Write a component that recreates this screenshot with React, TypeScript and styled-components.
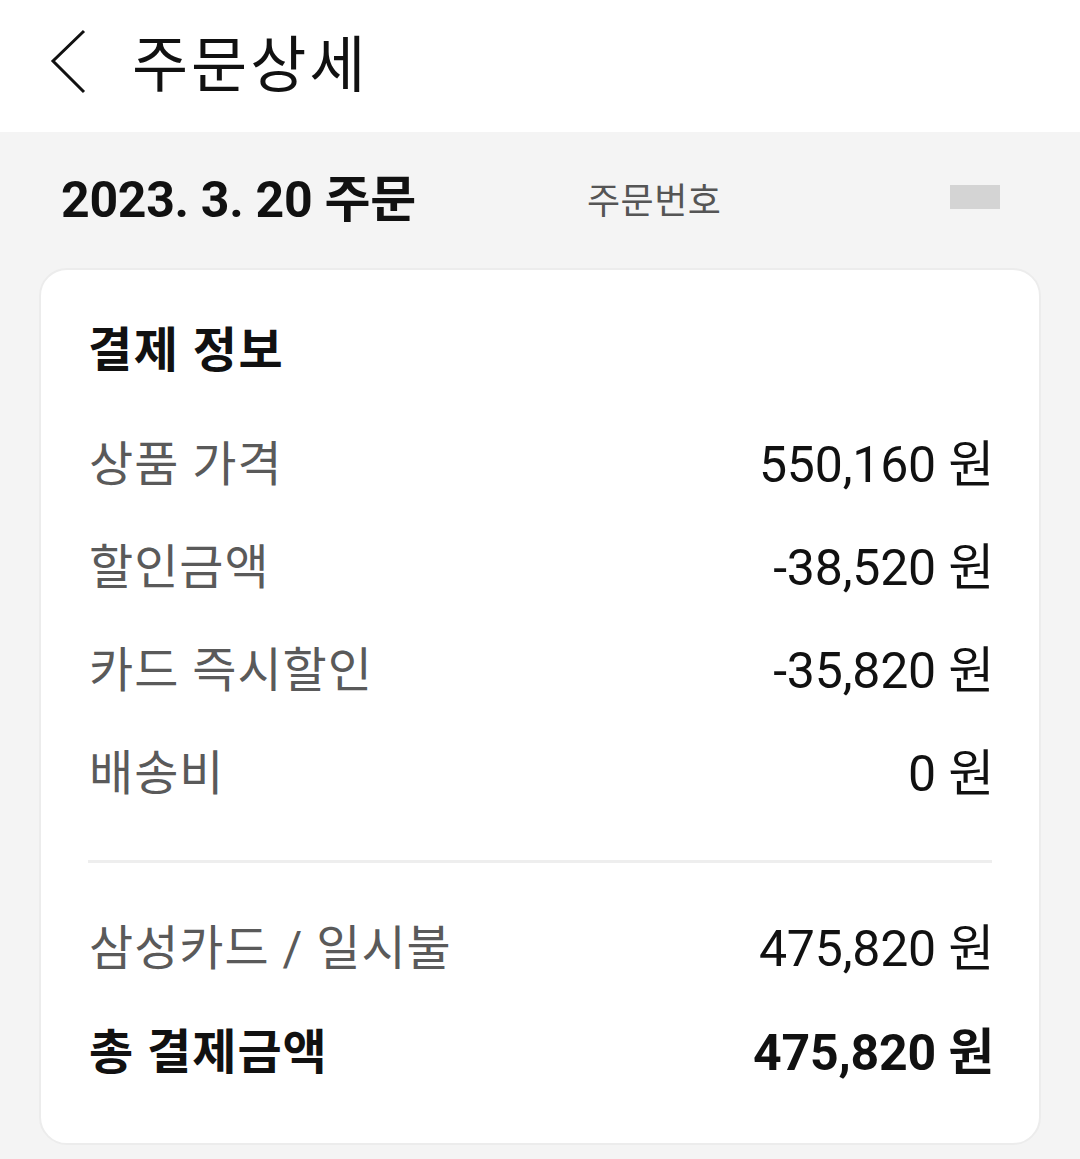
import React from "react";
import styled, { createGlobalStyle } from "styled-components";

const GlobalStyle = createGlobalStyle`
  html, body {
    margin: 0;
    padding: 0;
    background: #f4f4f4;
  }
  body {
    font-family: Roboto, "Noto Sans CJK KR", "Noto Sans", sans-serif;
    color: #111;
    -webkit-font-smoothing: antialiased;
  }
  * { box-sizing: border-box; }
`;

const Page = styled.div`
  width: 1080px;
  min-height: 1159px;
  background: #f4f4f4;
  display: flex;
  flex-direction: column;
`;

const Header = styled.header`
  height: 132px;
  background: #ffffff;
  display: flex;
  align-items: center;
  padding-left: 50px;
`;

const BackButton = styled.button`
  border: 0;
  background: transparent;
  padding: 0;
  margin: 0 0 10px 0;
  width: 40px;
  height: 66px;
  display: flex;
  align-items: center;
  justify-content: flex-start;
  cursor: pointer;
`;

const Title = styled.h1`
  margin: 0 0 0 42px;
  font-size: 61px;
  font-weight: 400;
  line-height: 1;
  color: #111;
  letter-spacing: 3px;
`;

const DateRow = styled.div`
  height: 136px;
  display: grid;
  grid-template-columns: 526px 1fr 50px;
  align-items: center;
  padding: 0 80px 0 61px;
`;

const OrderDate = styled.div`
  font-size: 50px;
  font-weight: 700;
  line-height: 1;
  color: #111;
  letter-spacing: -0.3px;
`;

const OrderNoLabel = styled.div`
  font-size: 36px;
  font-weight: 400;
  line-height: 1;
  color: #555;
  letter-spacing: 0.5px;
  transform: translateY(2px);
`;

const OrderNoMask = styled.div`
  width: 50px;
  height: 24px;
  background: #d4d4d4;
  transform: translateY(-3px);
`;

const Card = styled.section`
  margin: 0 39px;
  background: #ffffff;
  border: 2px solid #ececec;
  border-radius: 28px;
  padding: 46px 47px 38px 47px;
`;

const CardTitle = styled.h2`
  margin: 0;
  height: 60px;
  display: flex;
  align-items: center;
  font-size: 48px;
  font-weight: 700;
  color: #111;
  letter-spacing: 1.5px;
  margin-bottom: 37px;
`;

const Row = styled.div<{ $height?: number }>`
  height: ${(p) => p.$height ?? 103}px;
  display: flex;
  align-items: center;
  justify-content: space-between;
`;

const Label = styled.span<{ $strong?: boolean }>`
  font-size: 48px;
  line-height: 1;
  font-weight: ${(p) => (p.$strong ? 700 : 400)};
  color: ${(p) => (p.$strong ? "#111" : "#5a5a5a")};
  letter-spacing: 1px;
  padding-left: 1px;
`;

const Value = styled.span<{ $strong?: boolean }>`
  font-size: 50px;
  line-height: 1;
  font-weight: ${(p) => (p.$strong ? 700 : 400)};
  color: #111;
  letter-spacing: -0.2px;
  margin-right: -2px;
`;

const Divider = styled.hr`
  border: 0;
  height: 3px;
  background: #eeeeee;
  margin: 35px 0 34px 0;
`;

const ChevronLeft = () => (
  <svg width="40" height="66" viewBox="0 0 40 66" aria-hidden="true">
    <polyline
      points="34,3 3,33 34,64"
      fill="none"
      stroke="#111"
      strokeWidth="3"
      strokeLinecap="butt"
      strokeLinejoin="miter"
    />
  </svg>
);

type Item = { label: string; value: string };

const items: Item[] = [
  { label: "상품 가격", value: "550,160 원" },
  { label: "할인금액", value: "-38,520 원" },
  { label: "카드 즉시할인", value: "-35,820 원" },
  { label: "배송비", value: "0 원" },
];

export default function App() {
  return (
    <>
      <GlobalStyle />
      <Page>
        <Header>
          <BackButton aria-label="뒤로">
            <ChevronLeft />
          </BackButton>
          <Title>주문상세</Title>
        </Header>
        <DateRow>
          <OrderDate>2023. 3. 20 주문</OrderDate>
          <OrderNoLabel>주문번호</OrderNoLabel>
          <OrderNoMask />
        </DateRow>
        <Card>
          <CardTitle>결제 정보</CardTitle>
          {items.map((it) => (
            <Row key={it.label}>
              <Label>{it.label}</Label>
              <Value>{it.value}</Value>
            </Row>
          ))}
          <Divider />
          <Row $height={104}>
            <Label>삼성카드 / 일시불</Label>
            <Value>475,820 원</Value>
          </Row>
          <Row $height={104}>
            <Label $strong>총 결제금액</Label>
            <Value $strong>475,820 원</Value>
          </Row>
        </Card>
      </Page>
    </>
  );
}
